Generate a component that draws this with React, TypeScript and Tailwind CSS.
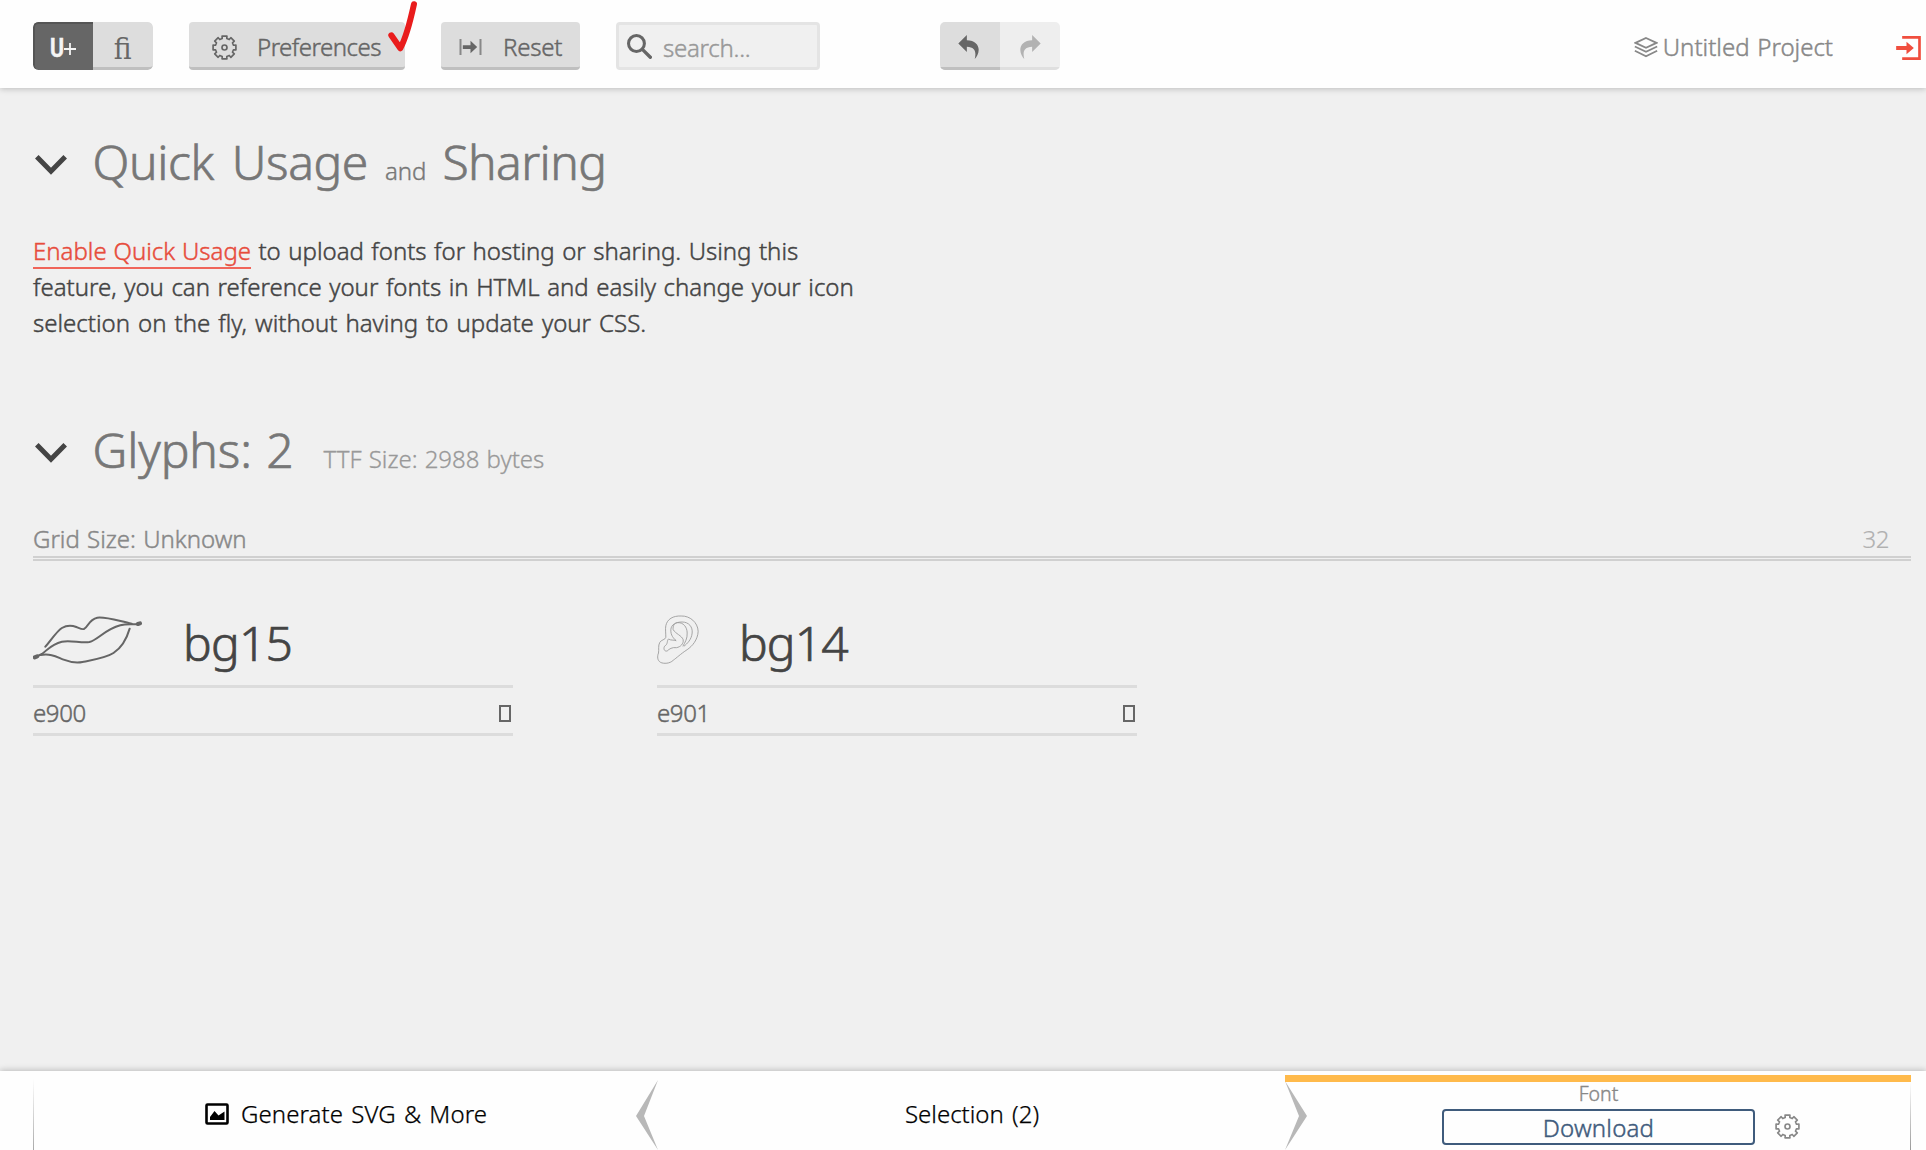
import type { ReactNode } from "react";

const gearPoints = (() => {
  const pts: string[] = [];
  for (let i = 0; i < 8; i++) {
    const c = (i * Math.PI) / 4;
    const at = (r: number, a: number) =>
      pts.push(`${(12 + r * Math.cos(c + a)).toFixed(2)},${(12 + r * Math.sin(c + a)).toFixed(2)}`);
    at(8.9, -0.25);
    at(11.2, -0.21);
    at(11.2, 0.21);
    at(8.9, 0.25);
  }
  return pts.join(" ");
})();

function Gear() {
  return (
    <svg viewBox="0 0 24 24" className="size-[25px] shrink-0" fill="none" stroke="currentColor">
      <polygon points={gearPoints} strokeWidth="1.6" strokeLinejoin="round" />
      <circle cx="12" cy="12" r="2.4" strokeWidth="1.6" />
    </svg>
  );
}

function UndoArrow({ flip = false }: { flip?: boolean }) {
  return (
    <svg viewBox="178 105 62 73" className={flip ? "h-[24px] w-[21px] -scale-x-100" : "mr-[3px] h-[24px] w-[21px]"} fill="currentColor">
      <path d="M178 131 204 105V121C228 121 240 135 240 150C240 162 234 172 228 178C233 158 230 142 204 141V157Z" />
    </svg>
  );
}

function Chevron() {
  return (
    <svg viewBox="0 0 32 20" className="h-5 w-8 shrink-0" fill="none" stroke="#444" strokeWidth="5">
      <path d="M1.8 1.8 16 16.2 30.2 1.8" />
    </svg>
  );
}

function Lips() {
  return (
    <svg viewBox="96 78 317 144" preserveAspectRatio="none" className="mt-px h-12 w-[109px]" fill="none" stroke="#666" strokeWidth="6" strokeLinecap="round">
      <path d="M132 170C150 148 166 123 180 114C195 105 212 107 222 111C232 115 238 119 244 117C256 112 258 88 283 83C310 80 345 93 383 101" />
      <path d="M104 201 122 192C140 178 150 162 180 155C205 149 235 160 260 156C285 150 305 118 350 106C370 101 388 105 405 101" />
      <path d="M118 195C150 190 165 201 185 209C205 217 225 219 240 216C275 209 310 203 330 189C355 172 368 148 377 116" />
      <path d="M101 202 108 199M401 102 407 100" strokeWidth="12" />
    </svg>
  );
}

function Ear() {
  return (
    <svg viewBox="50 76 125 147" className="h-[49px] w-[42px]" fill="none" stroke="#999" strokeWidth="2.6">
      <path d="M76 143C76 130 74 118 76 108C80 88 98 78 122 79C148 78 172 98 173 125C172 150 155 170 140 180C120 193 108 205 98 212C88 222 70 223 60 218C50 212 50 200 54 190C56 180 52 168 58 158C62 150 74 151 76 143Z" />
      <path d="M107 153C100 147 90 137 91 120C92 105 105 97 125 97C145 97 157 112 155 130C153 150 140 162 130 170" />
      <path d="M107 153C98 150 92 153 84 148C78 154 84 162 72 170C68 178 72 186 80 184C86 178 95 172 108 174C120 172 130 162 128 150C124 138 105 132 98 120C96 108 103 99 112 99C128 98 140 112 140 130C141 146 134 158 127 170" />
    </svg>
  );
}

function Heading({ children }: { children: ReactNode }) {
  return (
    <h1 className="flex h-[72px] items-center pl-0.5 text-[48px] leading-[72px] text-[#777] [-webkit-text-stroke:0.7px_#777]">
      <Chevron />
      <span className="ml-[25.5px] whitespace-nowrap pt-[3px]">{children}</span>
    </h1>
  );
}

function Glyph({ icon, name, code, gap }: { icon: ReactNode; name: string; code: string; gap: string }) {
  return (
    <div className="w-[480px]">
      <div className="flex h-[73px] items-start border-b-[3px] border-[#dcdcdc]">
        {icon}
        <span className={gap}>{name}</span>
      </div>
      <div className="flex h-12 items-center justify-between border-b-[3px] border-[#dcdcdc] pt-[5px] text-[#666] [-webkit-text-stroke:0.45px_#666]">
        <span className="tracking-[-0.4px]">{code}</span>
        <span className="mr-0.5 h-[17px] w-3 border-2 border-[#666]" />
      </div>
    </div>
  );
}

const button = "flex h-12 items-center rounded-[4px] border-b-[3px] border-[#bfbfbf] bg-[#ddd]";

export default function App() {
  return (
    <div className="flex h-[1150px] w-[1926px] flex-col overflow-hidden bg-[#f0f0f0] font-['Noto_Sans','Open_Sans',sans-serif] text-[24px] font-light leading-9 text-[#444]">
      <header className="relative flex h-[88px] shrink-0 items-start bg-[#fefefe] pl-[33px] pt-[22px] text-[#666] shadow-[0_1px_6px_rgba(0,0,0,0.22)] [-webkit-text-stroke:0.45px]">
        <div className="flex h-12 w-[120px] overflow-hidden rounded-[5px]">
          <div className="flex w-[60px] items-center justify-center rounded-l-[5px] border-2 border-r-0 border-b-0 border-[#555] bg-[#666] pr-[3px] pt-0.5 text-[#f5f5f5]">
            <span className="w-[14px] origin-left scale-x-[0.82] font-['Roboto'] text-[26px] font-bold">U</span>
            <svg viewBox="0 0 12 12" className="mt-0.5 size-3 stroke-[#f5f5f5]" strokeWidth="1.8">
              <path d="M6 0V12M0 6H12" />
            </svg>
          </div>
          <div className="flex w-[60px] items-center justify-center rounded-r-[5px] border-b-[3px] border-[#bfbfbf] bg-[#ddd] pt-2">
            <span className="scale-x-[0.92] font-['DejaVu_Serif'] text-[29px] [-webkit-text-stroke:0px]">ﬁ</span>
          </div>
        </div>
        <div className={`${button} ml-9 w-[216px] pl-[23px]`}>
          <span className="mt-[5px]"><Gear /></span>
          <span className="ml-[20px] pt-[5px] tracking-[-0.5px]">Preferences</span>
        </div>
        <div className={`${button} ml-9 w-[139px] pl-[18px]`}>
          <svg viewBox="120 117 66 48" className="mt-[4px] h-4 w-[23px]" fill="none">
            <path d="M123 117V165M183 117V165" stroke="#888" strokeWidth="6" />
            <path d="M130 136H153V122L173 141 153 160V147H130Z" fill="#666" />
          </svg>
          <span className="ml-[21px] pt-[5px] tracking-[-0.2px]">Reset</span>
        </div>
        <div className="ml-9 flex h-12 w-[204px] items-center rounded-[4px] border-[3px] border-[#e4e4e4] bg-[#f0f0f0] pl-2">
          <svg viewBox="621 101 74 74" className="size-[25px]" fill="none" stroke="#666">
            <circle cx="649" cy="129" r="23.5" strokeWidth="9" />
            <path d="M668 148 690 170" strokeWidth="10" strokeLinecap="round" />
          </svg>
          <span className="ml-[11px] pt-[3px] tracking-[-0.25px] text-[#999]">search...</span>
        </div>
        <div className="ml-[120px] flex h-12 w-[120px] overflow-hidden rounded-[5px]">
          <div className="flex w-[60px] items-center justify-center border-b-[3px] border-[#bfbfbf] bg-[#ddd] pt-1">
            <UndoArrow />
          </div>
          <div className="flex w-[60px] items-center justify-center border-b-[3px] border-[#dfdfdf] bg-[#eee] pt-1 text-[#b2b2b2]">
            <UndoArrow flip />
          </div>
        </div>
        <div className="ml-auto flex h-12 items-center text-[#888]">
          <svg viewBox="102 109 72 64" className="mt-0.5 h-[21px] w-6" fill="none" stroke="currentColor" strokeWidth="5.5">
            <path d="M138 112 170 127 138 142 106 127Z" />
            <path d="M104 138 138 154 172 138M104 151 138 168 172 151" />
          </svg>
          <span className="ml-[5px] pt-[2px] [word-spacing:1.5px]">Untitled Project</span>
        </div>
        <svg viewBox="890 107 74 72" className="ml-[63px] mr-[5px] mt-[14px] h-6 w-[25px]">
          <path d="M908 111H960V175H908" fill="none" stroke="#f04e3e" strokeWidth="8" />
          <path d="M890 137H921V124L943 143 921 162V149H890Z" fill="#f04e3e" />
        </svg>
        <svg viewBox="386 0 36 54" className="absolute left-[386px] top-0 h-[54px] w-9" fill="none" stroke="#e91c1c" strokeWidth="6" strokeLinecap="round" strokeLinejoin="round">
          <path d="M391.3 35.3 400.3 48.3C406 38 411 18 414 4.2" />
        </svg>
      </header>

      <main className="flex-1 px-[33px] pt-[41px]">
        <Heading>
          <span className="tracking-[-0.4px] [word-spacing:6px]">Quick Usage</span>
          <span className="ml-[17px] text-[24px] [-webkit-text-stroke:0.4px_#777]">and</span>
          <span className="ml-[16px] tracking-[-0.6px]">Sharing</span>
        </Heading>
        <p className="mt-8 whitespace-nowrap [-webkit-text-stroke:0.45px]">
          <span className="block h-9 [word-spacing:1.2px]">
            <a className="inline-block h-9 border-b-2 border-[#f0655a] text-[#e74c3c] [word-spacing:0.6px]">Enable Quick Usage</a> to upload fonts for hosting or sharing. Using this
          </span>
          <span className="block [word-spacing:1.3px]">feature, you can reference your fonts in HTML and easily change your icon</span>
          <span className="block [word-spacing:1.8px]">selection on the fly, without having to update your CSS.</span>
        </p>
        <div className="mt-[76px]">
          <Heading>
            <span className="tracking-[-0.1px] [word-spacing:2px]">Glyphs: 2</span>
            <span className="ml-[30px] text-[24px] text-[#999] [-webkit-text-stroke:0.3px_#999] [word-spacing:0.8px]">TTF Size: 2988 bytes</span>
          </Heading>
        </div>
        <div className="-mr-[18px] mt-8 flex h-[40px] justify-between border-b-[5px] border-double border-[#d0d0d0] text-[#888] [-webkit-text-stroke:0.45px]">
          <span className="[word-spacing:1px]">Grid Size: Unknown</span>
          <span className="mr-[22px] tracking-[-0.4px] text-[#b0b0b0] [-webkit-text-stroke:0.2px]">32</span>
        </div>
        <div className="mt-[54px] flex gap-36">
          <Glyph icon={<Lips />} name="bg15" code="e900" gap="ml-[41px] mt-1 text-[48px] leading-[48px] tracking-[-0.8px] [-webkit-text-stroke:0.7px_#444]" />
          <Glyph icon={<Ear />} name="bg14" code="e901" gap="ml-[40px] mt-1 text-[48px] leading-[48px] tracking-[-0.9px] [-webkit-text-stroke:0.7px_#444]" />
        </div>
      </main>

      <footer className="flex h-[79px] shrink-0 bg-[#fefefe] pl-[33px] pr-[15px] pt-1 text-black shadow-[0_-1px_6px_rgba(0,0,0,0.22)] [-webkit-text-stroke:0.25px]">
        <div className="flex w-[625px]">
          <div className="mt-1 w-px bg-linear-to-b from-transparent to-[#aaa]" />
          <div className="flex flex-1 items-center justify-center pl-[22px] pt-[3px]">
            <svg viewBox="0 0 24 22" className="h-[22px] w-6" fill="none">
              <rect x="1.5" y="1.5" width="21" height="19" rx="1" stroke="#000" strokeWidth="2.6" />
              <path d="M5 17V14L9.5 8 13.5 12.5 19.5 8.5V17Z" fill="#000" />
            </svg>
            <span className="ml-[12px] whitespace-nowrap tracking-[0.1px] [word-spacing:1.8px]">Generate SVG &amp; More</span>
          </div>
          <svg viewBox="0 0 22 70" className="mt-[5px] h-[70px] w-[22px]">
            <path d="M22 0 0 36 22 70 8 36Z" fill="#b8b8b8" />
          </svg>
        </div>
        <div className="flex w-[627px] items-center justify-center pl-px pt-[3px]">
          <span className="[word-spacing:2px]">Selection (2)</span>
        </div>
        <div className="flex flex-1 flex-col border-t-[7px] border-[#ffba4b]">
          <div className="flex flex-1">
            <svg viewBox="0 0 22 69" className="-mt-px h-[69px] w-[22px]">
              <path d="M0 0 22 35 0 69 14 35Z" fill="#b8b8b8" />
            </svg>
            <div className="ml-[135px] w-[313px] text-center">
              <div className="h-[27px] pt-0.5 text-[19.5px] leading-5 text-[#888] [-webkit-text-stroke:0.4px]">Font</div>
              <div className="h-9 rounded-[4px] border-2 border-[#3f5b7c] leading-[34px] tracking-[0.2px] text-[#3f5b7c] [-webkit-text-stroke:0.45px]">Download</div>
            </div>
            <div className="ml-5 mt-[32px] text-[#888]"><Gear /></div>
            <div className="ml-auto w-px bg-linear-to-b from-transparent to-[#999]" />
          </div>
        </div>
      </footer>
    </div>
  );
}
